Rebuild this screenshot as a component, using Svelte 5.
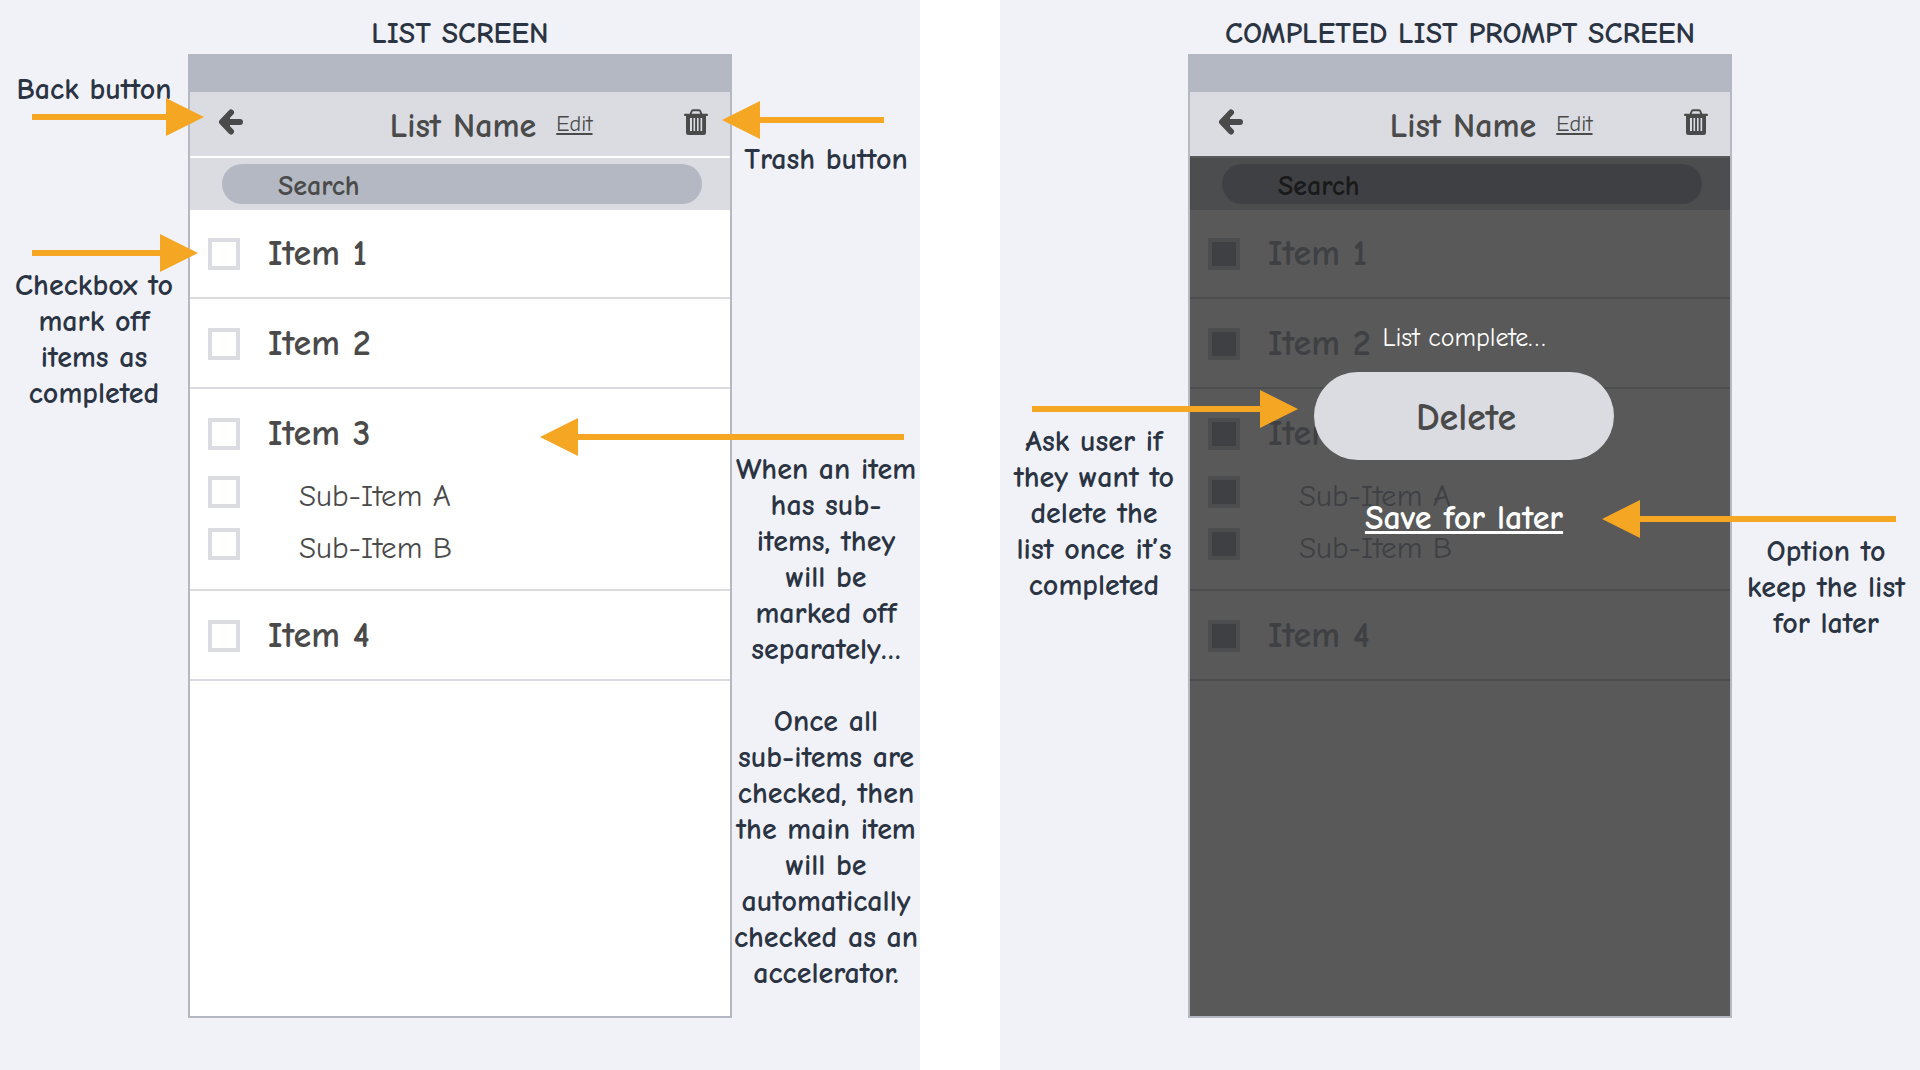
<script lang="ts">
	/**
	 * Annotated wireframes for the list app.
	 *
	 * Two boards side by side: the list itself, and the prompt
	 * that covers it once every item is checked.
	 */

	type Note = { text: string; arrow: number; kind: string; labelFirst?: boolean };
	type Board = { id: string; title: string; completed: boolean; left: Note[]; right: Note[] };

	const items = [
		{ name: 'Item 1', subs: [] },
		{ name: 'Item 2', subs: [] },
		{ name: 'Item 3', subs: ['Sub-Item A', 'Sub-Item B'] },
		{ name: 'Item 4', subs: [] }
	];

	// arrow is the arrow length in px, it may reach into the phone
	const boards: Board[] = [
		{
			id: 'list',
			title: 'LIST SCREEN',
			completed: false,
			left: [
				{ text: 'Back button', arrow: 172, kind: 'back', labelFirst: true },
				{ text: 'Checkbox to\nmark off\nitems as\ncompleted', arrow: 166, kind: 'checkbox' }
			],
			right: [
				{ text: 'Trash button', arrow: 162, kind: 'trash' },
				{
					text: 'When an item\nhas sub-\nitems, they\nwill be\nmarked off\nseparately…\n\nOnce all\nsub-items are\nchecked, then\nthe main item\nwill be\nautomatically\nchecked as an\naccelerator.',
					arrow: 364,
					kind: 'subitems'
				}
			]
		},
		{
			id: 'prompt',
			title: 'COMPLETED LIST PROMPT SCREEN',
			completed: true,
			left: [{ text: 'Ask user if\nthey want to\ndelete the\nlist once it’s\ncompleted', arrow: 266, kind: 'ask' }],
			right: [{ text: 'Option to\nkeep the list\nfor later', arrow: 294, kind: 'save' }]
		}
	];
</script>

{#snippet notes(list: Note[], side: string)}
	<aside class="notes {side}">
		{#each list as note}
			<div class="note {note.kind}" class:label-first={note.labelFirst}>
				<div class="arrow" style="width: {note.arrow}px" aria-hidden="true">
					<span class="shaft"></span>
					<span class="head"></span>
				</div>
				<p>{note.text}</p>
			</div>
		{/each}
	</aside>
{/snippet}

<main class="boards">
	{#each boards as board}
		<section class="board">
			<h1>{board.title}</h1>

			<div class="stage">
				{@render notes(board.left, 'left')}

				<div class="phone" class:completed={board.completed}>
					<div class="status-bar"></div>

					<header>
						<button type="button" class="icon-button" aria-label="Back">
							<svg width="26" height="26" viewBox="0 0 26 26" aria-hidden="true">
								<path
									d="M13 3.500L4 13l9 9.500M5 13h17"
									fill="none"
									stroke="currentColor"
									stroke-width="6"
									stroke-linecap="round"
									stroke-linejoin="round"
								/>
								<path d="M4 13l8-8v16z" fill="currentColor" />
							</svg>
						</button>
						<h2>List Name</h2>
						<div class="actions">
							<a href="#edit">Edit</a>
							<button type="button" class="icon-button" aria-label="Trash">
								<svg width="24" height="26" viewBox="0 0 24 26" aria-hidden="true">
									<path
										d="M6.500 5.500l1-3Q7.900 1.200 9.200 1.200h5.600q1.300 0 1.700 1.300l1 3"
										fill="none"
										stroke="currentColor"
										stroke-width="2"
									/>
									<rect x="0" y="4.700" width="24" height="2.300" rx="1" fill="currentColor" />
									<path
										fill="currentColor"
										fill-rule="evenodd"
										d="M2 6h20v17.500q0 2.500-2.500 2.500h-15Q2 26 2 23.500zM6 9v13h2V9zM9.500 9v13h1.600V9zM13 9v13h1.600V9zM16.500 9v13h1.700V9z"
									/>
								</svg>
							</button>
						</div>
					</header>

					<div class="content">
						<div class="search">
							<input type="search" placeholder="Search" aria-label="Search" />
						</div>

						<ul>
							{#each items as item}
								<li>
									<label class="item">
										<input type="checkbox" checked={board.completed} />
										<span>{item.name}</span>
									</label>
									{#if item.subs.length}
										<div class="subs">
											{#each item.subs as sub}
												<label class="sub">
													<input type="checkbox" checked={board.completed} />
													<span>{sub}</span>
												</label>
											{/each}
										</div>
									{/if}
								</li>
							{/each}
						</ul>

						{#if board.completed}
							<div class="overlay" role="dialog" aria-labelledby="prompt-message">
								<p id="prompt-message">List complete…</p>
								<button type="button" class="delete">Delete</button>
								<a href="#save">Save for later</a>
							</div>
						{/if}
					</div>
				</div>

				{@render notes(board.right, 'right')}
			</div>
		</section>
	{/each}
</main>

<style>
	:global(body) {
		margin: 0;
		background: #fff;
	}

	.boards {
		display: flex;
		gap: 80px;
		min-height: 100vh;
		font-family: 'Comic Sans MS', 'Comic Neue', 'Open Sans', sans-serif;
		color: #4a4a4a;
	}

	.board {
		flex: 1;
		display: flex;
		flex-direction: column;
		box-sizing: border-box;
		padding-bottom: 52px;
		background: #f1f2f8;
	}

	h1,
	h2,
	p,
	ul {
		margin: 0;
		padding: 0;
	}

	h1 {
		padding: 16px 0 2px;
		font-size: 30px;
		font-weight: 700;
		line-height: 36px;
		text-align: center;
		color: #2b3443;
	}

	.stage {
		flex: 1;
		display: grid;
		grid-template-columns: 188px 1fr 188px;
	}

	/* Notes */
	.notes {
		min-width: 0;
	}

	.note {
		display: flex;
		flex-direction: column;
		align-items: flex-start;
	}

	.note p {
		align-self: stretch;
		margin-top: -4px;
		font-size: 30px;
		font-weight: 700;
		line-height: 36px;
		text-align: center;
		white-space: pre;
		color: #2b3443;
	}

	.arrow {
		position: relative;
		z-index: 2;
		display: flex;
		align-items: center;
		height: 38px;
		margin-left: 32px;
	}

	.shaft {
		flex: 1;
		height: 6px;
		background: #f5a623;
	}

	.head {
		width: 38px;
		height: 38px;
		background: #f5a623;
		clip-path: polygon(0 0, 100% 50%, 0 100%);
	}

	.right .note {
		align-items: flex-end;
	}

	.right .arrow {
		flex-direction: row-reverse;
		margin: 0 16px 0 0;
	}

	.right .head {
		clip-path: polygon(100% 0, 0 50%, 100% 100%);
	}

	.label-first {
		flex-direction: column-reverse;
	}

	.label-first p {
		margin: 0 0 -10px;
	}

	.back {
		margin-top: 18px;
	}

	.checkbox {
		margin-top: 98px;
	}

	.trash {
		margin-top: 47px;
	}

	.trash p {
		margin-top: 3px;
	}

	.right .trash .arrow {
		margin-right: 36px;
	}

	.subitems {
		margin-top: 240px;
	}

	.ask {
		margin-top: 336px;
	}

	.save {
		margin-top: 446px;
	}

	.right .save .arrow {
		margin-right: 24px;
	}

	/* Phone */
	.phone {
		display: flex;
		flex-direction: column;
		border: 2px solid #b4b8c2;
		background: #fff;
	}

	.status-bar {
		height: 36px;
		background: #b4b8c2;
	}

	header {
		display: grid;
		grid-template-columns: 1fr auto 1fr;
		align-items: center;
		height: 64px;
		padding: 0 22px 0 28px;
		background: #dbdce1;
	}

	h2 {
		padding-top: 4px;
		font-size: 34px;
		font-weight: 700;
		line-height: 36px;
	}

	.actions {
		display: flex;
		align-items: center;
		justify-content: space-between;
		padding-left: 20px;
	}

	.actions a {
		font-size: 22px;
		line-height: 24px;
		color: inherit;
	}

	.icon-button {
		display: flex;
		justify-self: start;
		padding: 0 0 4px;
		border: 0;
		background: none;
		color: inherit;
		cursor: pointer;
	}

	.content {
		position: relative;
		flex: 1;
		padding-top: 2px;
	}

	.search {
		padding: 6px 28px 6px 32px;
		background: #dbdce1;
	}

	.search input {
		display: block;
		box-sizing: border-box;
		width: 100%;
		height: 40px;
		padding: 4px 56px 0;
		border: 0;
		border-radius: 20px;
		background: #b4b8c2;
		font: inherit;
		font-size: 28px;
		font-weight: 700;
		appearance: none;
	}

	.search input::placeholder {
		color: #4a4a4a;
		opacity: 1;
	}

	ul {
		list-style: none;
	}

	li {
		padding: 29px 18px 27px;
		border-bottom: 2px solid #dbdce1;
	}

	li:first-child {
		padding-top: 28px;
	}

	li:has(.subs) {
		padding-bottom: 29px;
	}

	.item,
	.sub {
		display: flex;
		align-items: center;
		gap: 28px;
		height: 32px;
		font-size: 36px;
		font-weight: 700;
	}

	.item span {
		padding-bottom: 2px;
	}

	.subs {
		display: flex;
		flex-direction: column;
		gap: 20px;
		margin-top: 26px;
	}

	.sub {
		gap: 59px;
		font-size: 31px;
		font-weight: 400;
	}

	.sub span {
		padding-top: 8px;
	}

	li input {
		flex: none;
		box-sizing: border-box;
		width: 32px;
		height: 32px;
		margin: 0;
		border: 4px solid #dbdce1;
		background: #fff;
		appearance: none;
	}

	li input:checked {
		background: #b4b8c2;
	}

	.completed ul {
		color: #b4b8c2;
	}

	/* Prompt */
	.overlay {
		position: absolute;
		inset: 0;
		display: flex;
		flex-direction: column;
		align-items: center;
		padding: 164px 0 0 8px;
		background: rgba(0, 0, 0, 0.65);
		color: #fff;
	}

	.overlay p {
		font-size: 26px;
		line-height: 36px;
	}

	.overlay .delete {
		width: 300px;
		height: 88px;
		margin: 16px 0 40px;
		padding: 4px 0 0 4px;
		border: 0;
		border-radius: 44px;
		background: #dbdce1;
		color: #4a4a4a;
		font: inherit;
		font-size: 38px;
		font-weight: 700;
		cursor: pointer;
	}

	.overlay a {
		font-size: 34px;
		font-weight: 700;
		line-height: 36px;
		color: inherit;
	}
</style>
